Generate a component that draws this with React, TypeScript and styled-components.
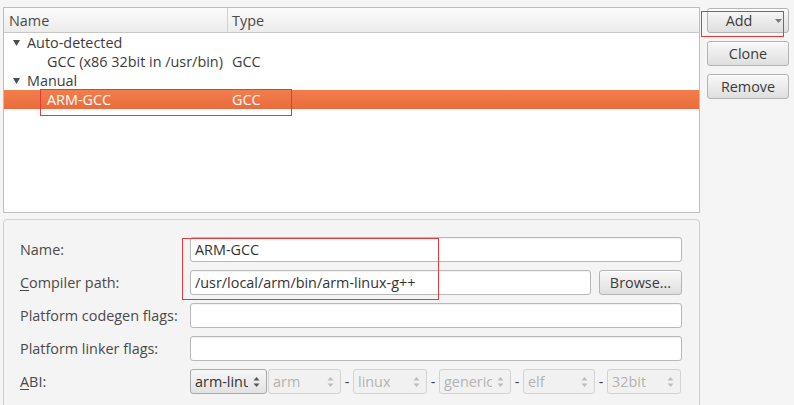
import React from 'react'
import styled, { createGlobalStyle, css } from 'styled-components'

const GlobalStyle = createGlobalStyle`
  html, body {
    margin: 0;
    padding: 0;
    background: #f5f5f5;
  }
  body {
    font-family: 'Open Sans', 'DejaVu Sans', sans-serif;
    font-size: 14.4px;
    color: #3c3c3c;
  }
`

const Page = styled.div`
  position: relative;
  display: flex;
  align-items: flex-start;
  gap: 7px;
  height: 405px;
  padding: 7px 0 0 3px;
  box-sizing: border-box;
  overflow: hidden;
`

const Main = styled.div`
  width: 697px;
  display: flex;
  flex-direction: column;
  gap: 6px;
  flex-shrink: 0;
`

const Tree = styled.div`
  height: 206px;
  flex-shrink: 0;
  border: 1px solid #bdbdbd;
  background: #fff;
  box-sizing: border-box;
`

const HeaderRow = styled.div`
  display: grid;
  grid-template-columns: 224px 1fr;
  height: 25px;
  background: linear-gradient(#fbfbfb, #ececec);
  border-bottom: 1px solid #c6c6c6;
  box-sizing: border-box;
`

const HeaderCell = styled.div<{ $divider?: boolean }>`
  display: flex;
  align-items: center;
  padding-left: ${(p) => (p.$divider ? '5px' : '4px')};
  border-right: ${(p) => (p.$divider ? '1px solid #d2d2d2' : 'none')};
  color: #4a4a4a;
`

const Row = styled.div<{ $selected?: boolean }>`
  display: grid;
  grid-template-columns: 224px 1fr;
  height: 19px;
  align-items: center;
  ${(p) =>
    p.$selected &&
    css`
      background: linear-gradient(#f27e4d, #ea6b3b);
      color: #fff;
    `}
`

const NameCell = styled.div<{ $depth: number }>`
  display: flex;
  align-items: center;
  padding-left: ${(p) => (p.$depth === 0 ? 9 : 43)}px;
  white-space: nowrap;
`

const TypeCell = styled.div`
  padding-left: 4px;
  white-space: nowrap;
`

const Expander = styled.svg`
  width: 7px;
  height: 6px;
  margin-right: 7px;
  fill: #4d4d4d;
`

const Side = styled.div`
  display: flex;
  flex-direction: column;
  gap: 8px;
  margin-top: 1px;
`

const PushButton = styled.button<{ $menu?: boolean }>`
  position: relative;
  width: 82px;
  height: 25px;
  padding: 0 ${(p) => (p.$menu ? '18px' : '0')} 0 0;
  border: 1px solid #b4b4b4;
  border-radius: 3px;
  background: linear-gradient(#f9f9f9, #dedede);
  font: inherit;
  color: #3c3c3c;
  box-shadow: inset 0 1px 0 #ffffff;
`

const MenuArrow = styled.svg`
  position: absolute;
  right: 6px;
  top: 10px;
  width: 7px;
  height: 4px;
  fill: #7a7a7a;
`

const Group = styled.div`
  height: 220px;
  flex-shrink: 0;
  border: 1px solid #d0d0d0;
  border-radius: 4px;
  background: #f4f4f4;
  padding: 17px 17px 0 16px;
  box-sizing: border-box;
`

const Form = styled.div`
  display: grid;
  grid-template-columns: 170px minmax(0, 1fr);
  grid-auto-rows: 25px;
  row-gap: 8px;
`

const Label = styled.div`
  display: flex;
  align-items: center;
  color: #4a4a4a;
  white-space: nowrap;
`

const Mnemonic = styled.span`
  text-decoration: underline;
  text-underline-offset: 2px;
`

const Field = styled.div`
  display: flex;
  align-items: center;
  gap: 8px;
  min-width: 0;
`

const TextInput = styled.div`
  flex: 1;
  height: 25px;
  display: flex;
  align-items: center;
  padding-left: 4px;
  border: 1px solid #b8b8b8;
  border-radius: 3px;
  background: #fff;
  box-sizing: border-box;
  color: #333;
  white-space: nowrap;
  box-shadow: inset 0 1px 1px rgba(0, 0, 0, 0.06);
`

const BrowseButton = styled(PushButton)`
  width: 83px;
  flex-shrink: 0;
`

const Combo = styled.div<{ $enabled?: boolean; $width: number }>`
  position: relative;
  width: ${(p) => p.$width}px;
  height: 25px;
  flex-shrink: 0;
  display: flex;
  align-items: center;
  padding: 0 18px 0 4px;
  box-sizing: border-box;
  border-radius: 3px;
  overflow: hidden;
  white-space: nowrap;
  ${(p) =>
    p.$enabled
      ? css`
          border: 1px solid #a9a9a9;
          background: linear-gradient(#f7f7f7, #e2e2e2);
          color: #333;
          margin-right: 1px;
        `
      : css`
          border: 1px solid #d3d3d3;
          background: #f1f1f1;
          color: #b3b3b3;
        `}
`

const ComboText = styled.span`
  overflow: hidden;
  display: block;
`

const Spinner = styled.svg<{ $enabled?: boolean }>`
  position: absolute;
  right: 6px;
  top: 6px;
  width: 7px;
  height: 12px;
  fill: ${(p) => (p.$enabled ? '#555' : '#bdbdbd')};
`

const Dash = styled.span`
  width: 12px;
  flex-shrink: 0;
  text-align: center;
  color: #3c3c3c;
`

const AbiRow = styled.div`
  display: flex;
  align-items: center;
`

const Marker = styled.div<{ $x: number; $y: number; $w: number; $h: number }>`
  position: absolute;
  left: ${(p) => p.$x}px;
  top: ${(p) => p.$y}px;
  width: ${(p) => p.$w}px;
  height: ${(p) => p.$h}px;
  border: 1px solid #e23b3b;
  box-sizing: border-box;
  pointer-events: none;
`

const Triangle = () => (
  <Expander viewBox="0 0 7 6">
    <polygon points="0,0 7,0 3.5,6" />
  </Expander>
)

const SpinIcon = ({ enabled }: { enabled?: boolean }) => (
  <Spinner $enabled={enabled} viewBox="0 0 7 12">
    <polygon points="0.5,4.5 6.5,4.5 3.5,1" />
    <polygon points="0.5,7.5 6.5,7.5 3.5,11" />
  </Spinner>
)

const abi = [
  { text: 'arm-linux', width: 77, enabled: true },
  { text: 'arm', width: 73 },
  { text: 'linux', width: 74 },
  { text: 'generic', width: 72 },
  { text: 'elf', width: 72 },
  { text: '32bit', width: 74 }
]

export default function App() {
  return (
    <>
      <GlobalStyle />
      <Page>
        <Main>
          <Tree>
            <HeaderRow>
              <HeaderCell $divider>Name</HeaderCell>
              <HeaderCell>Type</HeaderCell>
            </HeaderRow>
            <Row>
              <NameCell $depth={0}>
                <Triangle />
                Auto-detected
              </NameCell>
              <TypeCell />
            </Row>
            <Row>
              <NameCell $depth={1}>GCC (x86 32bit in /usr/bin)</NameCell>
              <TypeCell>GCC</TypeCell>
            </Row>
            <Row>
              <NameCell $depth={0}>
                <Triangle />
                Manual
              </NameCell>
              <TypeCell />
            </Row>
            <Row $selected>
              <NameCell $depth={1}>ARM-GCC</NameCell>
              <TypeCell>GCC</TypeCell>
            </Row>
          </Tree>

          <Group>
            <Form>
              <Label>Name:</Label>
              <Field>
                <TextInput>ARM-GCC</TextInput>
              </Field>

              <Label>
                <span>
                  <Mnemonic>C</Mnemonic>ompiler path:
                </span>
              </Label>
              <Field>
                <TextInput>/usr/local/arm/bin/arm-linux-g++</TextInput>
                <BrowseButton>Browse...</BrowseButton>
              </Field>

              <Label>Platform codegen flags:</Label>
              <Field>
                <TextInput />
              </Field>

              <Label>Platform linker flags:</Label>
              <Field>
                <TextInput />
              </Field>

              <Label>
                <span>
                  <Mnemonic>A</Mnemonic>BI:
                </span>
              </Label>
              <AbiRow>
                {abi.map((item, i) => (
                  <React.Fragment key={item.text}>
                    {i > 1 && <Dash>-</Dash>}
                    <Combo $enabled={item.enabled} $width={item.width}>
                      <ComboText>{item.text}</ComboText>
                      <SpinIcon enabled={item.enabled} />
                    </Combo>
                  </React.Fragment>
                ))}
              </AbiRow>
            </Form>
          </Group>
        </Main>

        <Side>
          <PushButton $menu>
            Add
            <MenuArrow viewBox="0 0 7 4">
              <polygon points="0,0 7,0 3.5,4" />
            </MenuArrow>
          </PushButton>
          <PushButton>Clone</PushButton>
          <PushButton>Remove</PushButton>
        </Side>

        <Marker $x={40} $y={89} $w={252} $h={27} />
        <Marker $x={701} $y={11} $w={83} $h={26} />
        <Marker $x={182} $y={238} $w={257} $h={62} />
      </Page>
    </>
  )
}
